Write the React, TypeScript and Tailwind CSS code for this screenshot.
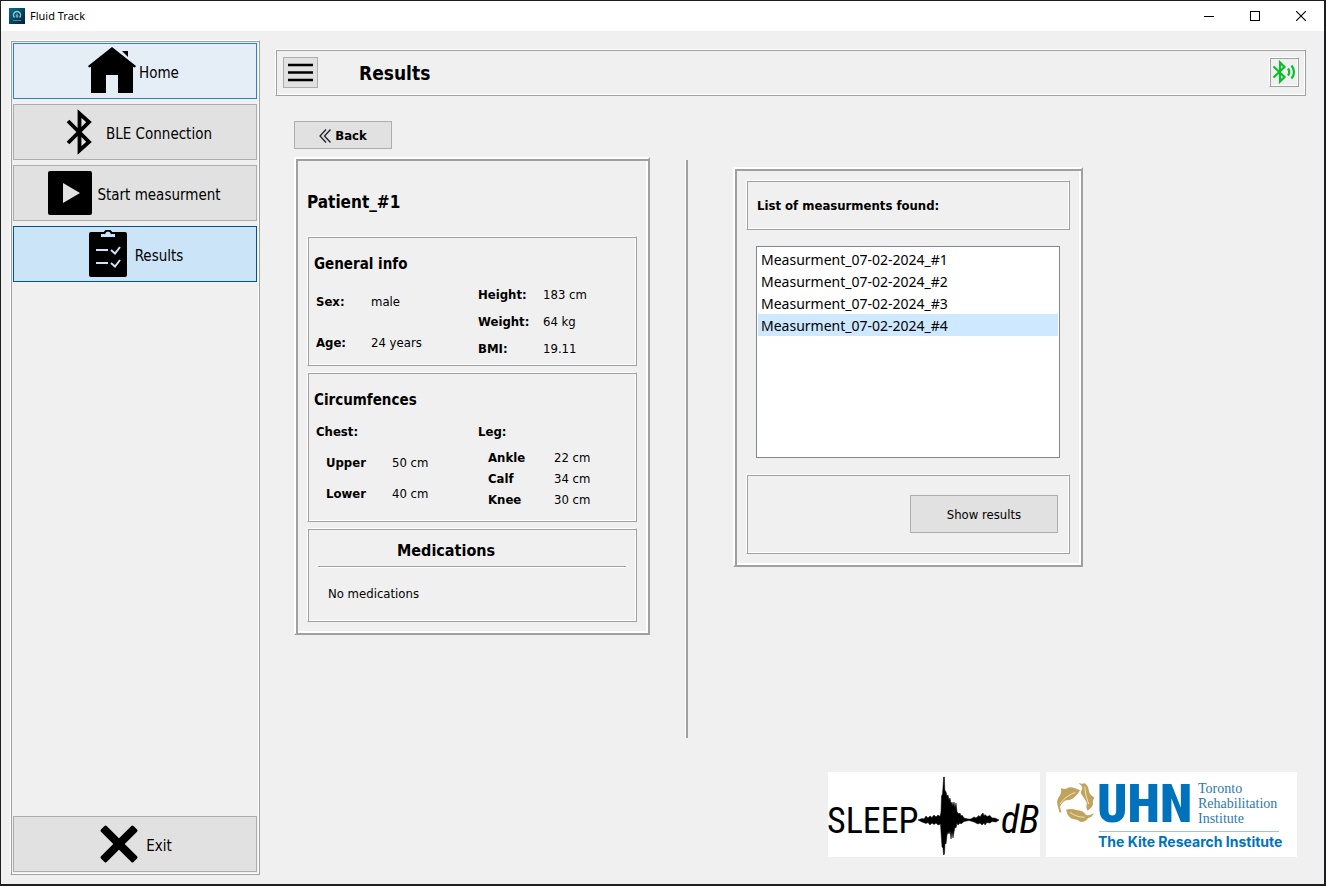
import { useState, type ReactNode } from "react";

const bevel =
  "border border-t-white border-l-white border-r-[#a0a0a0] border-b-[#a0a0a0] shadow-[inset_1px_1px_0_#a0a0a0,inset_-1px_-1px_0_#ffffff]";
const thickBevel =
  "border-2 border-t-white border-l-white border-r-[#a0a0a0] border-b-[#a0a0a0] shadow-[inset_2px_2px_0_#a0a0a0,inset_-2px_-2px_0_#ffffff]";
const plainButton = "border border-[#adadad] bg-[#e1e1e1] hover:border-[#0078d7] hover:bg-[#e5f1fb]";

function HomeIcon() {
  return (
    <svg viewBox="0 0 48 48" className="size-12" aria-hidden="true">
      <path d="M24 0 L48 19 L47 20.5 L45 20 V46 H30 V28 H18 V46 H3 V20 L1 20.5 L0 19 Z" />
      <path d="M34 4 H40 V10 Z" />
    </svg>
  );
}

function BluetoothIcon() {
  return (
    <svg viewBox="0 0 48 48" className="size-12" aria-hidden="true">
      <path
        d="M13 13 L34 34 L24.5 42.5 V5.5 L34 14 L13 35"
        fill="none"
        stroke="black"
        strokeWidth="3.8"
        strokeMiterlimit="10"
      />
    </svg>
  );
}

function PlayIcon() {
  return (
    <svg viewBox="0 0 48 48" className="size-12" aria-hidden="true">
      <path
        fillRule="evenodd"
        d="M4 2 H44 Q46 2 46 4 V44 Q46 46 44 46 H4 Q2 46 2 44 V4 Q2 2 4 2 Z M17 14 V34 L34 24 Z"
      />
    </svg>
  );
}

function ClipboardIcon() {
  return (
    <svg viewBox="0 0 48 48" className="size-12" aria-hidden="true">
      <rect x="5" y="2" width="38" height="45" rx="2" />
      <path d="M17 7 V4 H20 Q21 0 24 0 Q27 0 28 4 H31 V7 Z" fill="#cce4f7" />
      <path d="M20 4 Q21 0.500 24 0.500 Q27 0.500 28 4" fill="none" stroke="black" strokeWidth="2" />
      <path
        d="M12 20 H24 M12 33 H24 M27 20 L31 23.5 L36 17 M27 33 L31 36.5 L36 30"
        fill="none"
        stroke="#cce4f7"
        strokeWidth="2"
      />
    </svg>
  );
}

function ExitIcon() {
  return (
    <svg viewBox="0 0 48 48" className="size-12" aria-hidden="true">
      <g transform="translate(24 24)">
        <rect x="-23" y="-4" width="46" height="8" rx="1.5" transform="rotate(45)" />
        <rect x="-23" y="-4" width="46" height="8" rx="1.5" transform="rotate(-45)" />
      </g>
    </svg>
  );
}

function AppIcon() {
  return (
    <svg viewBox="0 0 16 16" className="size-4" aria-hidden="true">
      <defs>
        <linearGradient id="app" x1="0" y1="0" x2="1" y2="1">
          <stop offset="0" stopColor="#087089" />
          <stop offset="1" stopColor="#061d3a" />
        </linearGradient>
      </defs>
      <rect width="16" height="16" fill="url(#app)" />
      <path d="M5.5 9.500 A3.500 3.500 0 1 1 10.500 9.500" fill="none" stroke="#8fc4cb" strokeWidth="1.5" />
      <path d="M8 5.500 V10 M6.500 8 H9.500" stroke="#8fc4cb" />
      <path d="M4 12.500 H12" stroke="#4c8798" />
    </svg>
  );
}

function SleepLogo() {
  return (
    <svg viewBox="0 0 212 85" className="h-[85px] w-[212px] bg-white" role="img" aria-label="SLEEP dB">
      <text x="-1" y="61" fontFamily="'Roboto Condensed', sans-serif" fontSize="36">
        SLEEP
      </text>
      <path
        transform="translate(86 0)"
        stroke="black"
        strokeWidth="0.5"
        d="M4 48 L8 46.5 10 47 12 44 14 46 16 44 18 45.5 20 43 22 45 24 43 26 44.5 27 40 27.5 24 28.5 22 29 15 29.6 5 30.4 5 30.8 18 32 20 33 24 34 23 35 28 36 26 37 32 38 30 39 34 40 30 41 36 42 31 43 40 45 42 46 41 47 44 48 43 50 46 54 47 57 47 60 45 62 46 65 43.5 66 45 68 42 69 41 70 44 71 42.5 73 44.5 76 43.5 78 46 81 46 85 48 82 50 78 49.5 76 51 73 50.5 71 53 70 51 68 53 66 51 64 52 60 50 55 48.5 50 49.5 47 52 46 51 44 53 43 51 42 56 41 55 40 60 39 66 38 60 37 67 36 59 35 62 34 60 33 63 32 72 31 71 30.5 82 29.5 83 29 76 28 75 27 60 26.5 52 24 53 22 51 20 52.5 18 51 16 53 14 50.5 12 51.5 8 50 Z"
      />
      <text
        x="173"
        y="61"
        fontFamily="'Roboto Condensed', sans-serif"
        fontSize="38"
        fontStyle="italic"
      >
        dB
      </text>
    </svg>
  );
}

function UhnLogo() {
  return (
    <svg
      viewBox="0 0 251 85"
      className="h-[85px] w-[251px] bg-white"
      role="img"
      aria-label="UHN Toronto Rehabilitation Institute, The Kite Research Institute"
    >
      <g transform="translate(4 2) scale(0.3333)" fill="#c1a35b">
        <path d="M24 98 Q18 82 26 70 Q36 58 33 42 Q42 47 52 43 Q60 34 90 49 Q84 60 76 67 Q64 80 48 79 Q36 84 30 98 L34 114 L29 116 Z" />
        <path d="M86 27 Q96 31 105 28 Q115 36 117 52 Q120 64 133 70 Q127 80 129 92 Q124 104 113 110 Q106 101 111 88 Q106 76 98 66 Q88 56 97 44 Q96 34 86 27 Z" />
        <path d="M48 107 Q64 102 82 109 Q98 109 108 122 Q118 127 131 117 Q127 131 114 132 Q108 144 92 144 Q84 136 70 135 Q54 133 48 107 Z" />
        <path
          d="M30 90 Q44 68 76 55 M104 38 Q106 66 116 90 M60 115 Q78 129 104 130"
          fill="none"
          stroke="white"
          strokeWidth="2"
        />
      </g>
      <g fill="#0072bc">
        <text x="51" y="50" fontFamily="'Roboto Condensed', sans-serif" fontSize="53" fontWeight="900">
          UHN
        </text>
        <g fontFamily="'Liberation Serif', serif" fontSize="14" fill="#2d79b0">
          <text x="152" y="21">Toronto</text>
          <text x="152" y="36">Rehabilitation</text>
          <text x="152" y="51">Institute</text>
        </g>
        <rect x="53" y="59" width="180" height="1" fill="#9cc3e0" />
        <text x="52" y="75" fontFamily="Inter, sans-serif" fontSize="14" fontWeight="700">
          The Kite Research Institute
        </text>
      </g>
    </svg>
  );
}

type Item = { label: string; value: string };

function Fields({ items, className }: { items: Item[]; className: string }) {
  return (
    <dl className={`grid ${className}`}>
      {items.map((item) => (
        <div key={item.label} className="contents">
          <dt className="font-bold">{item.label}</dt>
          <dd>{item.value}</dd>
        </div>
      ))}
    </dl>
  );
}

function NavButton({
  icon,
  label,
  tone,
  onClick,
}: {
  icon: ReactNode;
  label: string;
  tone: string;
  onClick?: () => void;
}) {
  return (
    <button
      type="button"
      onClick={onClick}
      className={`flex h-14 w-full items-center justify-center gap-[3px] border pr-[3px] text-[15px] ${tone}`}
    >
      {icon}
      <span className="pt-[3px]">{label}</span>
    </button>
  );
}

const navItems = [
  { label: "Home", icon: <HomeIcon /> },
  { label: "BLE Connection", icon: <BluetoothIcon /> },
  { label: "Start measurment", icon: <PlayIcon /> },
  { label: "Results", icon: <ClipboardIcon /> },
];

const measurements = [
  "Measurment_07-02-2024_#1",
  "Measurment_07-02-2024_#2",
  "Measurment_07-02-2024_#3",
  "Measurment_07-02-2024_#4",
];

const idle = "border-[#adadad] bg-[#e1e1e1]";

export default function App() {
  const [page, setPage] = useState("Results");
  const [selected, setSelected] = useState(3);

  const tone = (label: string) => {
    if (label === page) return "border-[#005499] bg-[#cce4f7]";
    if (label === "Home") return "border-[#2a84cb] bg-[#e5edf6]";
    return idle;
  };

  return (
    <div className="flex min-h-screen flex-col border-t border-r-2 border-b-2 border-l border-[#1d1e22] bg-[#f0f0f0] font-['DejaVu_Sans_Condensed','DejaVu_Sans',sans-serif] text-[13px] leading-5 text-black">
      <header className="flex h-[30px] items-center bg-white pb-px pl-2">
        <AppIcon />
        <h1 className="ml-[5px] flex-1 font-['Noto_Sans',sans-serif] text-[11px]">Fluid Track</h1>
        <button type="button" aria-label="Minimize" className="flex h-full w-[46px] items-center justify-center">
          <svg viewBox="0 0 10 10" className="size-2.5" shapeRendering="crispEdges">
            <path d="M0 5.5 H10" stroke="black" />
          </svg>
        </button>
        <button type="button" aria-label="Maximize" className="flex h-full w-[46px] items-center justify-center">
          <svg viewBox="0 0 10 10" className="size-2.5" shapeRendering="crispEdges">
            <path d="M0.5 0.5 H9.5 V9.5 H0.5 Z" fill="none" stroke="black" />
          </svg>
        </button>
        <button type="button" aria-label="Close" className="flex h-full w-[46px] items-center justify-center">
          <svg viewBox="0 0 10 10" className="size-2.5">
            <path d="M0 0 L10 10 M10 0 L0 10" stroke="black" strokeWidth="1.1" />
          </svg>
        </button>
      </header>

      <div className="flex flex-1 gap-[15px] py-[9px] pr-[18px] pl-[9px]">
        <nav className={`flex w-[250px] shrink-0 flex-col gap-[5px] p-[2px] ${bevel}`}>
          {navItems.map((item) => (
            <NavButton
              key={item.label}
              icon={item.icon}
              label={item.label}
              tone={tone(item.label)}
              onClick={() => setPage(item.label)}
            />
          ))}
          <div className="mt-auto">
            <NavButton icon={<ExitIcon />} label="Exit" tone={idle} />
          </div>
        </nav>

        <main className="flex min-w-0 flex-1 flex-col pt-[9px]">
          <div className={`flex h-[47px] items-start pt-[7px] pr-[6px] pl-[7px] ${bevel}`}>
            <button
              type="button"
              aria-label="Menu"
              className={`flex h-[31px] w-[35px] items-center justify-center ${plainButton}`}
            >
              <svg viewBox="0 0 25 19" className="h-[19px] w-[25px]" aria-hidden="true">
                <path d="M0 2 H25 M0 9.5 H25 M0 17 H25" stroke="black" strokeWidth="2.5" />
              </svg>
            </button>
            <h2 className="ml-[41px] flex-1 text-[19px] leading-8 font-bold">Results</h2>
            <div className={`flex size-[30px] items-center justify-center ${bevel}`}>
              <svg
                viewBox="0 0 24 24"
                className="size-6"
                fill="none"
                stroke="#0cbd2b"
                strokeWidth="2.2"
                role="img"
                aria-label="Bluetooth connected"
              >
                <path d="M1.5 6.5 L12.5 17 L8 21.5 V2.5 L12.5 7 L1.5 17.5" />
                <path d="M16 8.5 Q18.500 12 16 15.5 M19.500 5.500 Q24.500 12 19.500 18.500" />
              </svg>
            </div>
          </div>

          <div className="mt-[25px] pl-[19px]">
            <button
              type="button"
              className={`flex h-7 w-[98px] items-center justify-center gap-1 pt-px font-bold ${plainButton}`}
            >
              <svg
                viewBox="0 0 12 14"
                className="h-3.5 w-3"
                fill="none"
                stroke="#222222"
                strokeWidth="1.3"
                aria-hidden="true"
              >
                <path d="M7 0.5 L1 7 L7 13.5 M11.5 0.5 L5.5 7 L11.5 13.5" />
              </svg>
              Back
            </button>
          </div>

          <div className="mt-2 mb-[34px] flex min-h-[581px] items-start pl-[19px]">
            <section className={`w-[356px] shrink-0 p-[11px] ${thickBevel}`}>
              <h3 className="mt-5 mb-[22px] text-[17px] leading-6 font-bold">Patient_#1</h3>

              <section className={`h-[130px] px-[6px] pt-[17px] ${bevel}`}>
                <h4 className="text-[15px] leading-5 font-bold">General info</h4>
                <div className="grid grid-cols-[162px_auto] items-start pl-[2px]">
                  <Fields
                    className="mt-[18px] grid-cols-[55px_auto] gap-y-[21px]"
                    items={[
                      { label: "Sex:", value: "male" },
                      { label: "Age:", value: "24 years" },
                    ]}
                  />
                  <Fields
                    className="mt-[11px] grid-cols-[65px_auto] gap-y-[7px]"
                    items={[
                      { label: "Height:", value: "183 cm" },
                      { label: "Weight:", value: "64 kg" },
                      { label: "BMI:", value: "19.11" },
                    ]}
                  />
                </div>
              </section>

              <section className={`mt-[6px] h-[150px] px-[6px] pt-[17px] ${bevel}`}>
                <h4 className="text-[15px] leading-5 font-bold">Circumfences</h4>
                <div className="mt-3 grid grid-cols-[162px_auto] items-start pl-[2px]">
                  <div>
                    <h5 className="font-bold">Chest:</h5>
                    <Fields
                      className="mt-[11px] grid-cols-[66px_auto] gap-y-[11px] pl-[10px]"
                      items={[
                        { label: "Upper", value: "50 cm" },
                        { label: "Lower", value: "40 cm" },
                      ]}
                    />
                  </div>
                  <div>
                    <h5 className="font-bold">Leg:</h5>
                    <Fields
                      className="mt-[6px] grid-cols-[66px_auto] gap-y-px pl-[10px]"
                      items={[
                        { label: "Ankle", value: "22 cm" },
                        { label: "Calf", value: "34 cm" },
                        { label: "Knee", value: "30 cm" },
                      ]}
                    />
                  </div>
                </div>
              </section>

              <section className={`mt-[6px] h-[94px] px-[10px] pt-3 ${bevel}`}>
                <h4 className="pl-[79px] text-base leading-5 font-bold">Medications</h4>
                <hr className="mt-[5px] border-t border-b border-t-[#a0a0a0] border-b-white" />
                <p className="mt-4 pl-[10px]">No medications</p>
              </section>
            </section>

            <div className="mt-[3px] ml-[35px] w-[3px] shrink-0 self-stretch border-l border-l-white bg-[#a0a0a0]" />

            <section className={`mt-[10px] ml-[45px] w-[350px] shrink-0 p-[11px] ${thickBevel}`}>
              <div className={`flex h-[50px] items-center px-[10px] pt-[2px] ${bevel}`}>
                <h3 className="font-bold">List of measurments found:</h3>
              </div>
              <ul className="mx-[10px] my-4 h-[212px] overflow-auto border border-[#828790] bg-white p-px font-['Noto_Sans',sans-serif] text-sm leading-6">
                {measurements.map((name, index) => (
                  <li key={name} className="h-[22px]">
                    <button
                      type="button"
                      aria-pressed={index === selected}
                      onClick={() => setSelected(index)}
                      className={`flex h-[22px] w-full px-[3px] text-left ${index === selected ? "bg-[#cde8ff]" : ""}`}
                    >
                      {name}
                    </button>
                  </li>
                ))}
              </ul>
              <div className={`flex h-20 items-center justify-end px-[11px] ${bevel}`}>
                <button type="button" className={`h-[38px] w-[148px] pt-[2px] ${plainButton}`}>
                  Show results
                </button>
              </div>
            </section>
          </div>

          <footer className="mt-auto flex justify-end gap-[6px] pr-[9px] pb-[18px]">
            <SleepLogo />
            <UhnLogo />
          </footer>
        </main>
      </div>
    </div>
  );
}
